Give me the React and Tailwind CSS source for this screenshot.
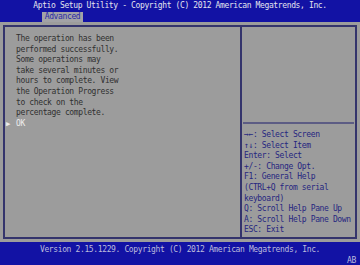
import React from "react";

const mono = "font-['DejaVu_Sans_Mono',monospace] text-[8px] leading-[10.6px] tracking-[-0.37px] whitespace-pre";

export default function App() {
  const msg = [
    "The operation has been",
    "performed successfully.",
    "Some operations may",
    "take several minutes or",
    "hours to complete. View",
    "the Operation Progress",
    "to check on the",
    "percentage complete.",
  ];
  const help = [
    "\u2192\u2190: Select Screen",
    "\u2191\u2193: Select Item",
    "Enter: Select",
    "+/-: Change Opt.",
    "F1: General Help",
    "(CTRL+Q from serial",
    "keyboard)",
    "Q: Scroll Help Pane Up",
    "A: Scroll Help Pane Down",
    "ESC: Exit",
  ];
  return (
    <div className={`w-[360px] h-[265px] flex flex-col bg-[#9c9c9c] ${mono}`}>
      <div className="h-[12px] bg-[#1212a4] flex items-center justify-center text-[#e4e4ee] pt-[1px]">
        Aptio Setup Utility - Copyright (C) 2012 American Megatrends, Inc.
      </div>
      <div className="h-[10px] bg-[#1212a4] flex">
        <div className="ml-[42px] w-[41px] bg-[#a2a2a6] text-[#2a2aa8] flex items-center justify-center">
          Advanced
        </div>
      </div>
      <div className="flex-1 px-[3px] pt-[3px] pb-[3px] flex">
        <div className="flex-1 flex border-2 border-[#34346c]">
          <div className="w-[235px] pl-[11px] pt-[7px] text-[#303030]">
            {msg.map((l, i) => (
              <div key={i}>{l}</div>
            ))}
            <div className="relative text-[#ececec]">
              <span className="absolute left-[-10px] top-0 text-[7px]">{"\u25B6"}</span>
              OK
            </div>
          </div>
          <div className="w-[2px] bg-[#34346c]" />
          <div className="flex-1 flex flex-col">
            <div className="h-[95px]" />
            <div className="h-[2px] bg-[#5c5c84] mx-[1px]" />
            <div className="pl-[2px] pt-[6px] text-[#262680]">
              {help.map((l, i) => (
                <div key={i}>{l}</div>
              ))}
            </div>
          </div>
        </div>
      </div>
      <div className="h-[23px] bg-[#1212a4] flex flex-col text-[#bcbcdc]">
        <div className="text-center pt-[3px]">
          Version 2.15.1229. Copyright (C) 2012 American Megatrends, Inc.
        </div>
        <div className="text-right pr-[4px] leading-[9px]">AB</div>
      </div>
    </div>
  );
}
